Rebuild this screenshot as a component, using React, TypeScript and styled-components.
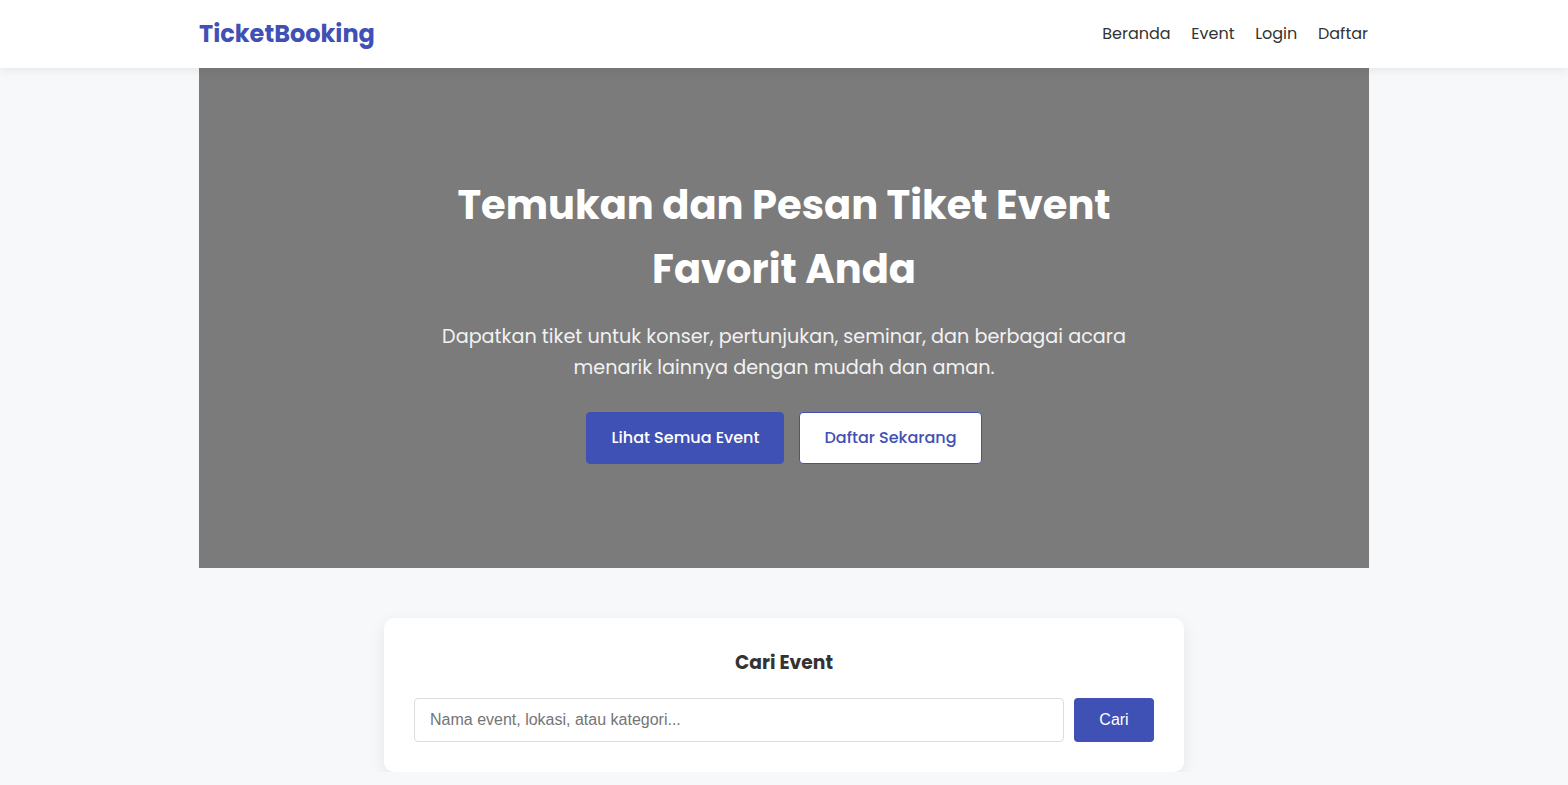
import React from "react";
import styled, { createGlobalStyle } from "styled-components";

const FONT = `"Poppins", "Open Sans", "Noto Sans", sans-serif`;

const Global = createGlobalStyle`
  * { box-sizing: border-box; }
  html, body { margin: 0; padding: 0; }
  body {
    background: #f7f8fa;
    font-family: ${FONT};
    color: #333;
  }
`;

const Header = styled.header`
  background: #fff;
  height: 68px;
  box-shadow: 0 2px 10px rgba(0, 0, 0, 0.08);
  position: relative;
  z-index: 2;
`;

const Container = styled.div`
  width: 1170px;
  margin: 0 auto;
`;

const NavBar = styled(Container)`
  height: 100%;
  display: flex;
  align-items: center;
  justify-content: space-between;
  padding: 0 1px 2px 0;
`;

const Logo = styled.a`
  font-size: 24px;
  font-weight: 700;
  color: #3f51b5;
  text-decoration: none;
`;

const NavLinks = styled.nav`
  display: flex;
  gap: 20.7px;
`;

const NavLink = styled.a`
  font-size: 16px;
  color: #333;
  text-decoration: none;
`;

const Hero = styled(Container)`
  height: 500px;
  background: #7b7b7b;
  display: flex;
  flex-direction: column;
  align-items: center;
  justify-content: center;
  text-align: center;
  color: #fff;
  padding-top: 1px;
`;

const HeroTitle = styled.h1`
  font-size: 40px;
  font-weight: 700;
  line-height: 64px;
  margin: 0 0 21px;
  max-width: 700px;
`;

const HeroText = styled.p`
  font-size: 19.2px;
  line-height: 1.6;
  margin: 0 0 28px;
  max-width: 700px;
  color: #f2f2f2;
`;

const Buttons = styled.div`
  display: flex;
  gap: 15px;
`;

const Button = styled.a<{ $outline?: boolean }>`
  display: inline-flex;
  align-items: center;
  justify-content: center;
  height: 52px;
  padding: 0 24px;
  border-radius: 4px;
  font-size: 16px;
  font-weight: 500;
  text-decoration: none;
  background: ${(p) => (p.$outline ? "#fff" : "#3f51b5")};
  color: ${(p) => (p.$outline ? "#3f51b5" : "#fff")};
  border: 1px solid #3f51b5;
`;

const SearchSection = styled.section`
  padding: 50px 0 0;
  display: flex;
  justify-content: center;
`;

const Card = styled.div`
  width: 800px;
  background: #fff;
  border-radius: 10px;
  box-shadow: 0 5px 15px rgba(0, 0, 0, 0.08);
  padding: 30px;
`;

const CardTitle = styled.h3`
  font-size: 18.72px;
  font-weight: 700;
  text-align: center;
  margin: 1px 0 21px;
  line-height: 28px;
  color: #333;
`;

const SearchRow = styled.form`
  display: flex;
  gap: 10px;
`;

const Input = styled.input`
  flex: 1;
  height: 44px;
  border: 1px solid #ddd;
  border-radius: 4px;
  padding: 0 15px;
  font-family: "Liberation Sans", Arial, sans-serif;
  font-size: 16px;
  color: #333;
  outline: none;
  &::placeholder { color: #757575; }
`;

const SearchButton = styled.button`
  width: 80px;
  height: 44px;
  border: none;
  border-radius: 4px;
  background: #3f51b5;
  color: #fff;
  font-family: "Liberation Sans", Arial, sans-serif;
  font-size: 16px;
`;

export default function App() {
  return (
    <>
      <Global />
      <Header>
        <NavBar>
          <Logo href="#">TicketBooking</Logo>
          <NavLinks>
            <NavLink href="#">Beranda</NavLink>
            <NavLink href="#">Event</NavLink>
            <NavLink href="#">Login</NavLink>
            <NavLink href="#">Daftar</NavLink>
          </NavLinks>
        </NavBar>
      </Header>
      <Hero as="section">
        <HeroTitle>Temukan dan Pesan Tiket Event Favorit Anda</HeroTitle>
        <HeroText>
          Dapatkan tiket untuk konser, pertunjukan, seminar, dan berbagai acara menarik lainnya dengan mudah dan aman.
        </HeroText>
        <Buttons>
          <Button href="#">Lihat Semua Event</Button>
          <Button href="#" $outline>Daftar Sekarang</Button>
        </Buttons>
      </Hero>
      <SearchSection>
        <Card>
          <CardTitle>Cari Event</CardTitle>
          <SearchRow onSubmit={(e) => e.preventDefault()}>
            <Input placeholder="Nama event, lokasi, atau kategori..." />
            <SearchButton type="submit">Cari</SearchButton>
          </SearchRow>
        </Card>
      </SearchSection>
    </>
  );
}
